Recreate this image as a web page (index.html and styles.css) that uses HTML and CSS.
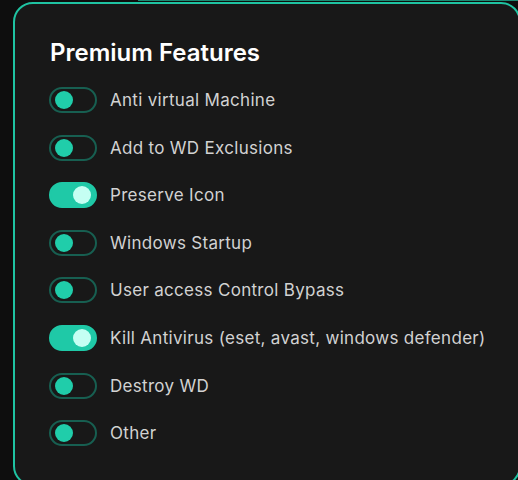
FILE: index.html
```html
<!DOCTYPE html>
<html>
<head>
<meta charset="utf-8">
<link rel="stylesheet" href="styles.css">
</head>
<body>
<div class="topline"></div>
<section class="card">
  <h2 class="title">Premium Features</h2>
  <ul class="list">
    <li class="row"><span class="toggle"></span><span class="label">Anti virtual Machine</span></li>
    <li class="row"><span class="toggle"></span><span class="label">Add to WD Exclusions</span></li>
    <li class="row"><span class="toggle on"></span><span class="label">Preserve Icon</span></li>
    <li class="row"><span class="toggle"></span><span class="label">Windows Startup</span></li>
    <li class="row"><span class="toggle"></span><span class="label">User access Control Bypass</span></li>
    <li class="row"><span class="toggle on"></span><span class="label">Kill Antivirus (eset, avast, windows defender)</span></li>
    <li class="row"><span class="toggle"></span><span class="label">Destroy WD</span></li>
    <li class="row"><span class="toggle"></span><span class="label">Other</span></li>
  </ul>
</section>
</body>
</html>
```
FILE: styles.css
```css
html, body {
  margin: 0;
  padding: 0;
  background: #0e0e0e;
  overflow: hidden;
  width: 518px;
  height: 480px;
}
body {
  position: relative;
  font-family: Inter, "Noto Sans", sans-serif;
}
.topline {
  position: absolute;
  left: 138px;
  top: 0;
  width: 400px;
  height: 1px;
  background: #1c8a74;
}
.card {
  box-sizing: border-box;
  margin: 2px 0 0 13px;
  width: 508px;
  height: 484px;
  border: 2px solid #1fc3a2;
  border-radius: 20px;
  background: #181818;
  padding: 34px 0 0 34px;
}
.title {
  margin: 0 0 19px 1px;
  color: #ffffff;
  font-size: 24px;
  font-weight: 600;
  line-height: 30px;
}
.list {
  list-style: none;
  margin: 0;
  padding: 0;
  display: flex;
  flex-direction: column;
  gap: 21.6px;
}
.row {
  display: flex;
  align-items: center;
  gap: 13px;
  height: 26px;
}
.toggle {
  box-sizing: border-box;
  position: relative;
  width: 48px;
  height: 26px;
  border: 2px solid #175f51;
  border-radius: 13px;
  flex: none;
}
.toggle::after {
  content: "";
  position: absolute;
  left: 4px;
  top: 2px;
  width: 18px;
  height: 18px;
  border-radius: 50%;
  background: #20cdaa;
}
.toggle.on {
  background: #1fc9a7;
  border-color: #1fc9a7;
}
.toggle.on::after {
  left: auto;
  right: 4px;
  background: #c5fff3;
}
.label {
  color: #d2d2d2;
  font-size: 17px;
  letter-spacing: 0.3px;
}
```
